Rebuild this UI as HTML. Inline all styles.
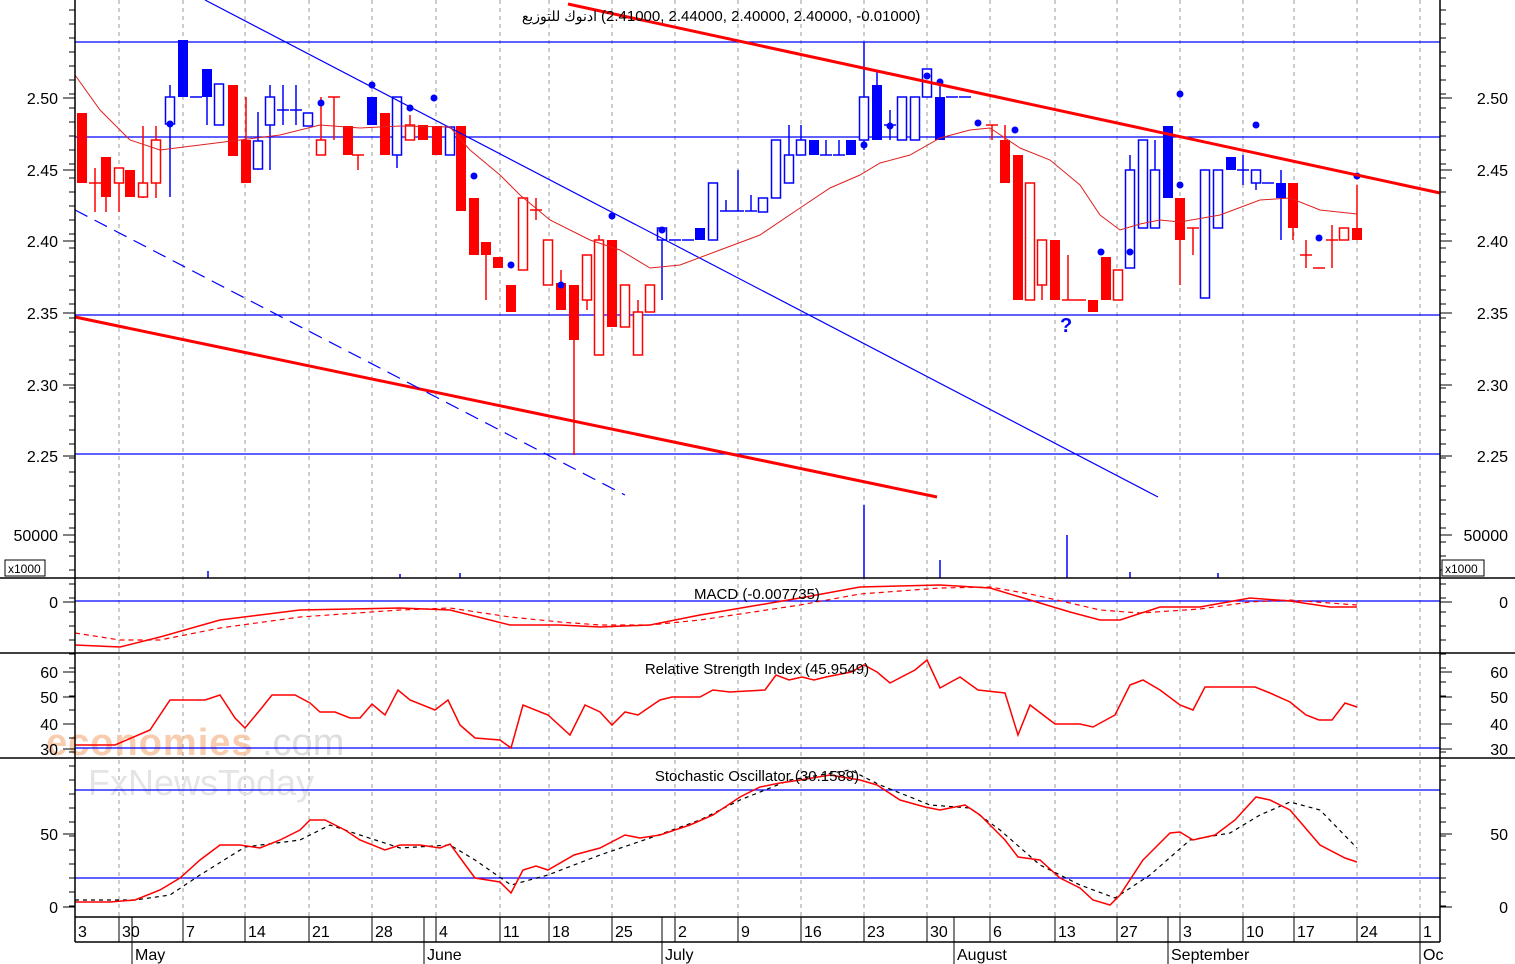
<!DOCTYPE html>
<html><head><meta charset="utf-8"><style>
html,body{margin:0;padding:0;background:#fff;}
svg{display:block;font-family:"Liberation Sans","Noto Sans CJK SC",sans-serif;}
</style></head><body>
<svg id="s" width="1515" height="964" viewBox="0 0 1515 964" xmlns="http://www.w3.org/2000/svg">
<rect width="1515" height="964" fill="#fff"/>
<g id="grid" stroke="#999" stroke-dasharray="4,4" stroke-width="1"></g>
<text x="46" y="755" font-size="38" fill="#f7c4a0" font-weight="bold" opacity="0.85" letter-spacing="1">economies</text>
<text x="262" y="755" font-size="38" fill="#ddd">.com</text>
<text x="88" y="795" font-size="36" fill="#e4e4e4">FxNewsToday</text>
<g stroke="#0000ff" stroke-width="1.3">
<line x1="75" y1="42" x2="1440" y2="42"/><line x1="75" y1="137" x2="1440" y2="137"/>
<line x1="75" y1="315" x2="1440" y2="315"/><line x1="75" y1="454" x2="1440" y2="454"/>
<line x1="75" y1="601" x2="1440" y2="601"/><line x1="75" y1="748" x2="1440" y2="748"/>
<line x1="75" y1="790" x2="1440" y2="790"/><line x1="75" y1="878" x2="1440" y2="878"/>
</g>
<g id="candles"></g>
<line x1="568" y1="4" x2="1440" y2="193" stroke="#f00" stroke-width="3"/>
<line x1="75" y1="317" x2="937" y2="497" stroke="#f00" stroke-width="3"/>
<line x1="205" y1="0" x2="1158" y2="497" stroke="#0000ff" stroke-width="1.2"/>
<line x1="75" y1="210" x2="625" y2="495" stroke="#0000ff" stroke-width="1.2" stroke-dasharray="14,8"/>
<text x="1060" y="332" font-size="20" font-weight="bold" fill="#0000ff">?</text>
<g id="lines" fill="none"></g>
<g stroke="#0000ff" stroke-width="1.5">
<line x1="864" y1="505" x2="864" y2="578"/><line x1="940" y1="560" x2="940" y2="578"/>
<line x1="1067" y1="535" x2="1067" y2="578"/><line x1="208" y1="571" x2="208" y2="578"/>
<line x1="460" y1="573" x2="460" y2="578"/><line x1="1130" y1="572" x2="1130" y2="578"/>
<line x1="1218" y1="573" x2="1218" y2="578"/><line x1="400" y1="574" x2="400" y2="578"/>
</g>
<g stroke="#000" stroke-width="1.5" fill="none">
<line x1="75" y1="0" x2="75" y2="942"/><line x1="1440" y1="0" x2="1440" y2="942"/>
<line x1="0" y1="578" x2="1515" y2="578"/><line x1="0" y1="653" x2="1515" y2="653"/>
<line x1="0" y1="758" x2="1515" y2="758"/><line x1="75" y1="917" x2="1440" y2="917"/>
<line x1="75" y1="942" x2="1440" y2="942"/>
</g>
<g id="ticks" stroke="#000" stroke-width="1"></g>
<g id="labels" font-size="16" fill="#000"></g>
<rect x="5" y="560" width="40" height="16" fill="#fff" stroke="#000"/>
<text x="8" y="573" font-size="12">x1000</text>
<rect x="1442" y="560" width="42" height="16" fill="#fff" stroke="#000"/>
<text x="1445" y="573" font-size="12">x1000</text>
<text x="597" y="21" font-size="14" text-anchor="end">ادنوك للتوزيع</text>
<text x="601" y="21" font-size="15">(2.41000, 2.44000, 2.40000, 2.40000, -0.01000)</text>
<text x="757" y="599" font-size="15" text-anchor="middle">MACD (-0.007735)</text>
<text x="757" y="674" font-size="15" text-anchor="middle">Relative Strength Index (45.9549)</text>
<text x="757" y="781" font-size="15" text-anchor="middle">Stochastic Oscillator (30.1589)</text>
</svg>
<script>
var NS="http://www.w3.org/2000/svg";
function el(p,t,a,txt){var e=document.createElementNS(NS,t);for(var k in a)e.setAttribute(k,a[k]);if(txt!==undefined)e.textContent=txt;document.getElementById(p).appendChild(e);return e;}
var gx=[119,183,245,309,372,436,500,549,612,675,738,801,864,927,990,1055,1117,1180,1243,1294,1357,1420];
gx.forEach(function(x){el("grid","line",{x1:x,y1:0,x2:x,y2:917});});
var C=[[82,113,183,113,183,'R'],[95,183,183,168,212,'l'],[106,157,197,157,212,'R'],[119,168,183,168,212,'r'],[130,170,197,170,197,'R'],[143,183,197,126,198,'r'],[156,140,183,126,198,'r'],[170,97,124,85,197,'b'],[183,40,97,40,97,'B'],[196,97,97,97,97,'L'],[207,69,97,69,125,'B'],[219,84,125,84,125,'b'],[233,85,156,85,156,'R'],[246,140,183,97,183,'R'],[258,141,169,112,170,'b'],[270,97,125,85,170,'b'],[283,110,110,85,125,'L'],[296,110,110,85,125,'L'],[308,113,126,113,126,'b'],[321,140,155,97,155,'r'],[334,97,97,97,140,'l'],[348,126,155,126,155,'R'],[358,155,155,155,170,'l'],[372,97,125,97,125,'B'],[385,113,155,113,155,'R'],[397,97,155,97,168,'b'],[410,125,140,115,140,'r'],[423,125,140,125,140,'R'],[437,126,155,126,155,'R'],[450,127,155,127,155,'b'],[461,126,211,126,211,'R'],[474,198,255,198,255,'R'],[486,242,255,242,300,'R'],[498,257,268,257,268,'R'],[511,285,312,285,312,'R'],
[523,198,270,198,270,'r'],[536,210,210,198,220,'l'],[548,240,285,240,285,'r'],[561,283,310,270,310,'R'],[574,285,340,285,455,'R'],[587,255,300,255,310,'r'],[599,240,355,235,355,'r'],[612,240,327,240,327,'R'],[625,285,327,285,327,'r'],[638,312,355,300,355,'r'],[650,285,312,285,312,'r'],[662,228,240,228,300,'b'],[675,240,240,240,240,'L'],[688,240,240,240,240,'L'],[700,228,240,228,240,'B'],[713,183,240,183,240,'b'],[726,211,211,200,211,'L'],[738,211,211,170,211,'L'],[751,211,211,195,211,'L'],[763,198,212,198,212,'b'],[776,140,198,140,198,'b'],[789,155,183,125,183,'b'],[801,140,155,125,155,'b'],[814,140,155,140,155,'B'],[826,155,155,140,155,'L'],[839,155,155,140,155,'L'],[851,140,155,140,155,'B'],[864,97,140,42,150,'b'],[877,85,140,70,140,'B'],[890,125,125,110,140,'L'],[902,97,140,97,140,'b'],[915,97,140,97,140,'b'],[927,69,97,69,97,'b'],[940,97,140,80,140,'B'],[952,97,97,97,97,'L'],[965,97,97,97,97,'L'],
[992,125,140,125,140,'l'],[1005,140,183,125,183,'R'],[1018,155,300,155,300,'R'],[1030,183,300,183,300,'r'],[1042,240,285,240,300,'r'],[1055,240,300,240,300,'R'],[1068,300,300,255,300,'l'],[1080,300,300,300,300,'l'],[1093,300,312,300,312,'R'],[1106,257,300,257,300,'R'],[1118,270,300,270,300,'r'],[1130,170,268,155,268,'b'],[1143,140,228,140,228,'b'],[1155,170,228,140,228,'b'],[1168,126,198,126,198,'B'],[1180,198,240,198,285,'R'],[1193,228,255,228,255,'l'],[1205,170,298,170,298,'b'],[1218,170,228,170,228,'b'],[1231,157,170,157,170,'B'],[1243,170,170,155,185,'L'],[1256,170,183,170,190,'b'],[1268,183,183,183,183,'L'],[1281,183,198,170,240,'B'],[1293,183,228,183,240,'R'],[1306,255,255,240,268,'l'],[1319,268,268,268,268,'l'],[1332,240,268,225,268,'l'],[1344,228,240,228,240,'r'],[1357,228,240,185,240,'R']];
C.forEach(function(c){var x=c[0],col=(c[5]=='R'||c[5]=='r'||c[5]=='l')?'#f00':'#0000ff';
el("candles","line",{x1:x,y1:c[3],x2:x,y2:c[4],stroke:col,"stroke-width":1.5});
if(c[5]=='l'||c[5]=='L'){el("candles","line",{x1:x-6,y1:c[1],x2:x+6,y2:c[1],stroke:col,"stroke-width":1.5});return;}
var h=Math.max(c[2]-c[1],2);
if(c[5]=='R'||c[5]=='B')el("candles","rect",{x:x-5,y:c[1],width:10,height:h,fill:col});
else el("candles","rect",{x:x-4.5,y:c[1],width:9,height:h,fill:"#fff",stroke:col,"stroke-width":1.5});});
[[170,124],[321,103],[372,85],[410,108],[434,98],[474,176],[511,265],[561,285],[612,216],[662,230],[864,145],[890,126],[927,76],[940,82],[978,123],[1015,130],[1101,252],[1130,252],[1180,94],[1180,185],[1256,125],[1319,238],[1357,176]].forEach(function(p){el("candles","circle",{cx:p[0],cy:p[1],r:3.5,fill:"#0000ff"});});
function pl(pts,st,w,dash){var a={points:pts.map(function(p){return p.join(",");}).join(" "),stroke:st,"stroke-width":w,fill:"none"};if(dash)a["stroke-dasharray"]=dash;el("lines","polyline",a);}
pl([[75,75],[100,110],[130,140],[160,150],[200,145],[240,140],[280,135],[320,125],[360,128],[400,126],[450,127],[470,150],[500,175],[520,195],[550,220],[590,240],[620,250],[650,268],[680,265],[720,250],[760,235],[800,208],[830,188],[860,175],[880,163],[910,155],[940,138],[970,130],[990,128],[1020,148],[1050,160],[1080,185],[1100,215],[1120,230],[1140,224],[1160,220],[1180,222],[1220,215],[1260,200],[1290,198],[1320,210],[1357,214]],"#e02020",1);
pl([[75,645],[120,647],[160,637],[220,620],[300,610],[400,608],[450,610],[510,625],[560,625],[600,627],[650,625],[700,615],[800,598],[860,587],[940,585],[990,588],[1030,600],[1070,612],[1100,620],[1120,620],[1160,607],[1200,607],[1250,598],[1290,601],[1330,607],[1357,607]],"#f00",1.5);
pl([[75,633],[120,640],[160,640],[220,628],[300,617],[400,610],[450,608],[510,617],[560,622],[600,625],[650,625],[700,620],[800,605],[860,594],[940,588],[990,587],[1030,594],[1070,603],[1100,610],[1140,613],[1200,609],[1250,602],[1290,600],[1330,603],[1357,605]],"#f00",1.2,"5,4");
pl([[75,745],[115,745],[150,730],[170,700],[205,700],[220,695],[235,718],[245,728],[260,710],[272,695],[295,695],[310,703],[320,712],[335,712],[350,718],[360,718],[372,704],[385,715],[398,690],[410,700],[435,710],[448,700],[460,725],[475,738],[500,740],[511,748],[523,705],[548,715],[570,735],[585,705],[600,712],[612,725],[625,712],[638,715],[660,700],[672,697],[700,697],[713,690],[730,692],[765,690],[776,675],[789,680],[802,677],[814,680],[826,677],[851,672],[864,665],[877,672],[890,683],[915,670],[927,660],[940,688],[960,677],[978,690],[1005,693],[1018,735],[1030,705],[1055,724],[1080,724],[1093,727],[1115,715],[1130,685],[1143,680],[1160,690],[1180,705],[1193,710],[1205,687],[1255,687],[1270,693],[1290,702],[1306,715],[1319,720],[1332,720],[1345,703],[1357,707]],"#f00",1.5);
pl([[75,900],[135,900],[170,895],[200,875],[245,847],[300,840],[330,825],[360,835],[400,848],[450,845],[475,860],[511,885],[548,875],[600,855],[650,838],[700,820],[740,800],[790,780],[850,770],[880,785],[930,805],[970,808],[1000,830],[1040,865],[1080,885],[1115,898],[1150,875],[1190,840],[1230,833],[1260,815],[1290,802],[1320,810],[1357,848]],"#000",1.2,"4,4");
pl([[75,902],[110,902],[135,900],[160,890],[180,878],[200,860],[220,845],[240,845],[260,848],[280,840],[300,830],[310,820],[325,820],[345,830],[360,840],[385,850],[400,845],[420,845],[440,848],[450,844],[475,878],[500,882],[511,893],[523,870],[536,866],[548,870],[574,855],[600,848],[625,835],[640,838],[660,835],[690,825],[713,815],[740,797],[760,787],[780,783],[800,780],[830,775],[860,780],[877,785],[900,800],[925,807],[940,810],[965,805],[980,815],[1005,840],[1018,857],[1040,860],[1060,878],[1080,888],[1093,900],[1110,905],[1120,895],[1143,860],[1170,833],[1180,832],[1193,840],[1215,835],[1235,820],[1256,797],[1270,800],[1290,810],[1320,845],[1345,858],[1357,862]],"#f00",1.5);
[[98,"2.50"],[170,"2.45"],[241,"2.40"],[313,"2.35"],[385,"2.30"],[456,"2.25"],[535,"50000"],[602,"0"],[672,"60"],[697,"50"],[724,"40"],[749,"30"],[834,"50"],[907,"0"]].forEach(function(l){
el("labels","text",{x:58,y:l[0]+6,"text-anchor":"end"},l[1]);el("labels","text",{x:1508,y:l[0]+6,"text-anchor":"end"},l[1]);
el("ticks","line",{x1:63,y1:l[0],x2:75,y2:l[0]});el("ticks","line",{x1:1440,y1:l[0],x2:1452,y2:l[0]});});
for(var y=10;y<917;y+=14){el("ticks","line",{x1:69,y1:y,x2:75,y2:y});el("ticks","line",{x1:1440,y1:y,x2:1446,y2:y});}
var days=[[75,"3"],[119,"30"],[183,"7"],[245,"14"],[309,"21"],[372,"28"],[436,"4"],[500,"11"],[549,"18"],[612,"25"],[675,"2"],[738,"9"],[801,"16"],[864,"23"],[927,"30"],[990,"6"],[1055,"13"],[1117,"27"],[1180,"3"],[1243,"10"],[1294,"17"],[1357,"24"],[1420,"1"]];
days.forEach(function(d){el("ticks","line",{x1:d[0],y1:917,x2:d[0],y2:942});el("labels","text",{x:d[0]+3,y:937},d[1]);});
[[132,"May"],[424,"June"],[662,"July"],[954,"August"],[1168,"September"],[1420,"Oc"]].forEach(function(m){el("ticks","line",{x1:m[0],y1:917,x2:m[0],y2:964});el("labels","text",{x:m[0]+3,y:960},m[1]);});
</script>
</body></html>
